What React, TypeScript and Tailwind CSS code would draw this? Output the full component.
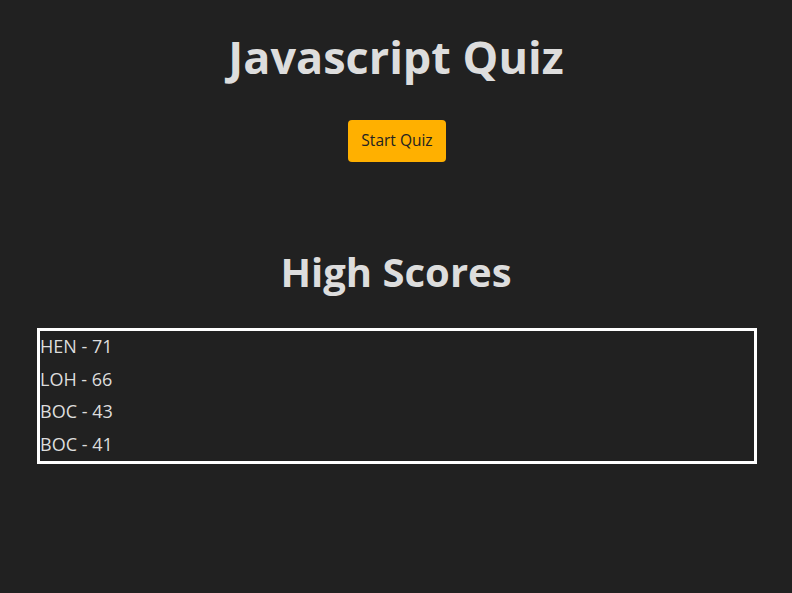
import React from "react";

const scores = [
	{ name: "HEN", score: 71 },
	{ name: "LOH", score: 66 },
	{ name: "BOC", score: 43 },
	{ name: "BOC", score: 41 },
];

export default function App() {
	return (
		<div
			className="min-h-[593px] w-full bg-[#212121] text-[#dddddd] flex flex-col"
			style={{ fontFamily: '"Open Sans", "Noto Sans", sans-serif' }}
		>
			{/* --- Quiz header --- */}
			<div className="flex flex-col items-center">
				<h1 className="mt-[28px] h-[58px] text-[45px] leading-[58px] font-bold">
					Javascript Quiz
				</h1>
				<button className="mt-[34px] ml-[2px] w-[98px] h-[42px] rounded-[4px] bg-[#ffb000] text-[#222222] text-[15.5px]">
					Start Quiz
				</button>
			</div>

			{/* --- High scores --- */}
			<h2 className="mt-[86px] h-[48px] text-center text-[40px] leading-[48px] font-bold">
				High Scores
			</h2>
			<ul className="mt-[32px] ml-[37px] w-[720px] h-[136px] border-[3px] border-white">
				{scores.map((s, idx) => (
					<li key={idx} className="h-[32.5px] leading-[31px] text-[18px]">
						{s.name} - {s.score}
					</li>
				))}
			</ul>
		</div>
	);
}
